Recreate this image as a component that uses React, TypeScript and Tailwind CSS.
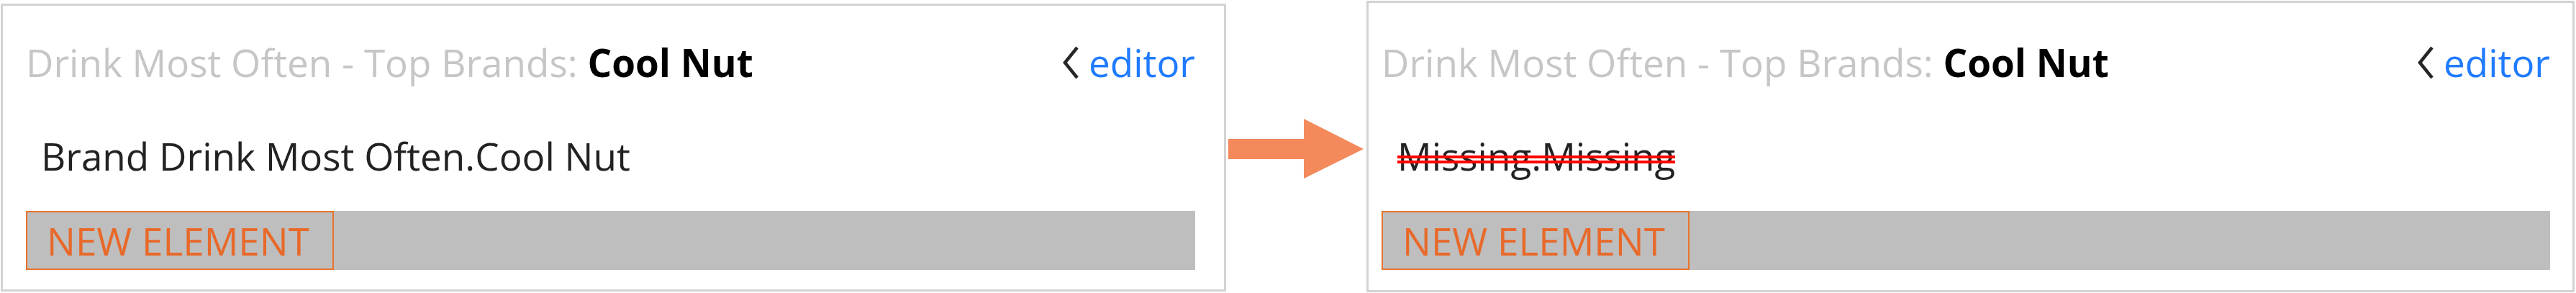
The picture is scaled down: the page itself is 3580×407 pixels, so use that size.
import React from "react";

const FONT = "font-['Open_Sans','Noto_Sans',sans-serif]";

function Chevron() {
  return (
    <svg width="26" height="46" viewBox="0 0 26 46" className="shrink-0">
      <polyline points="22,2 5,23 22,44" fill="none" stroke="#262626" strokeWidth="4.5" />
    </svg>
  );
}

type CardProps = {
  body: string;
  missing?: boolean;
  frame: string; // outer size / offset
  top: string; // header top margin
  px: string; // content padding
  bodyPl: string;
};

function Card({ body, missing, frame, top, px, bodyPl }: CardProps) {
  return (
    <div className={`flex shrink-0 flex-col border-[3px] border-[#d3d3d3] bg-white ${frame}`}>
      <div className={`flex flex-col ${px}`}>
        {/* header */}
        <div className={`flex h-[60px] items-center justify-between text-[53px] leading-[60px] ${top}`}>
          <div className="whitespace-nowrap">
            <span className="text-[#c6c6c6]">Drink Most Often - Top Brands: </span>
            <span className="font-bold text-black">Cool Nut</span>
          </div>
          <div className="flex items-center gap-[12px]">
            <Chevron />
            <span className="text-[#1f7bff]">editor</span>
          </div>
        </div>

        {/* value */}
        <div className={`mt-[70px] h-[60px] text-[53px] leading-[60px] text-[#222] ${bodyPl}`}>
          {missing ? (
            <span className="relative inline-block">
              {body}
              <span className="absolute inset-x-0 top-[29px] h-[4px] bg-[#ff0000]" />
              <span className="absolute inset-x-0 top-[36px] h-[4px] bg-[#ff0000]" />
            </span>
          ) : (
            body
          )}
        </div>

        {/* element bar */}
        <div className="mt-[46px] flex h-[82px] bg-[#bebebe]">
          <div className="flex w-[428px] items-center border-2 border-[#e8732c] pl-[27px] text-[53px] leading-none text-[#e8692a]">
            NEW ELEMENT
          </div>
        </div>
      </div>
    </div>
  );
}

export default function App() {
  return (
    <div className={`flex h-[407px] w-[3580px] items-start bg-white ${FONT}`}>
      <Card
        body="Brand Drink Most Often.Cool Nut"
        frame="ml-[1px] mt-[5px] h-[400px] w-[1703px]"
        top="mt-[49px]"
        px="pl-[32px] pr-[40px]"
        bodyPl="pl-[21px]"
      />
      <svg width="195" height="407" viewBox="0 0 195 407" className="shrink-0">
        <polygon points="3,193 108,193 108,165 191,207 108,248 108,221 3,221" fill="#f4895c" />
      </svg>
      <Card
        body="Missing.Missing"
        missing
        frame="mt-[1px] h-[405px] w-[1679px]"
        top="mt-[53px]"
        px="pl-[18px] pr-[31px]"
        bodyPl="pl-[22px]"
      />
    </div>
  );
}
